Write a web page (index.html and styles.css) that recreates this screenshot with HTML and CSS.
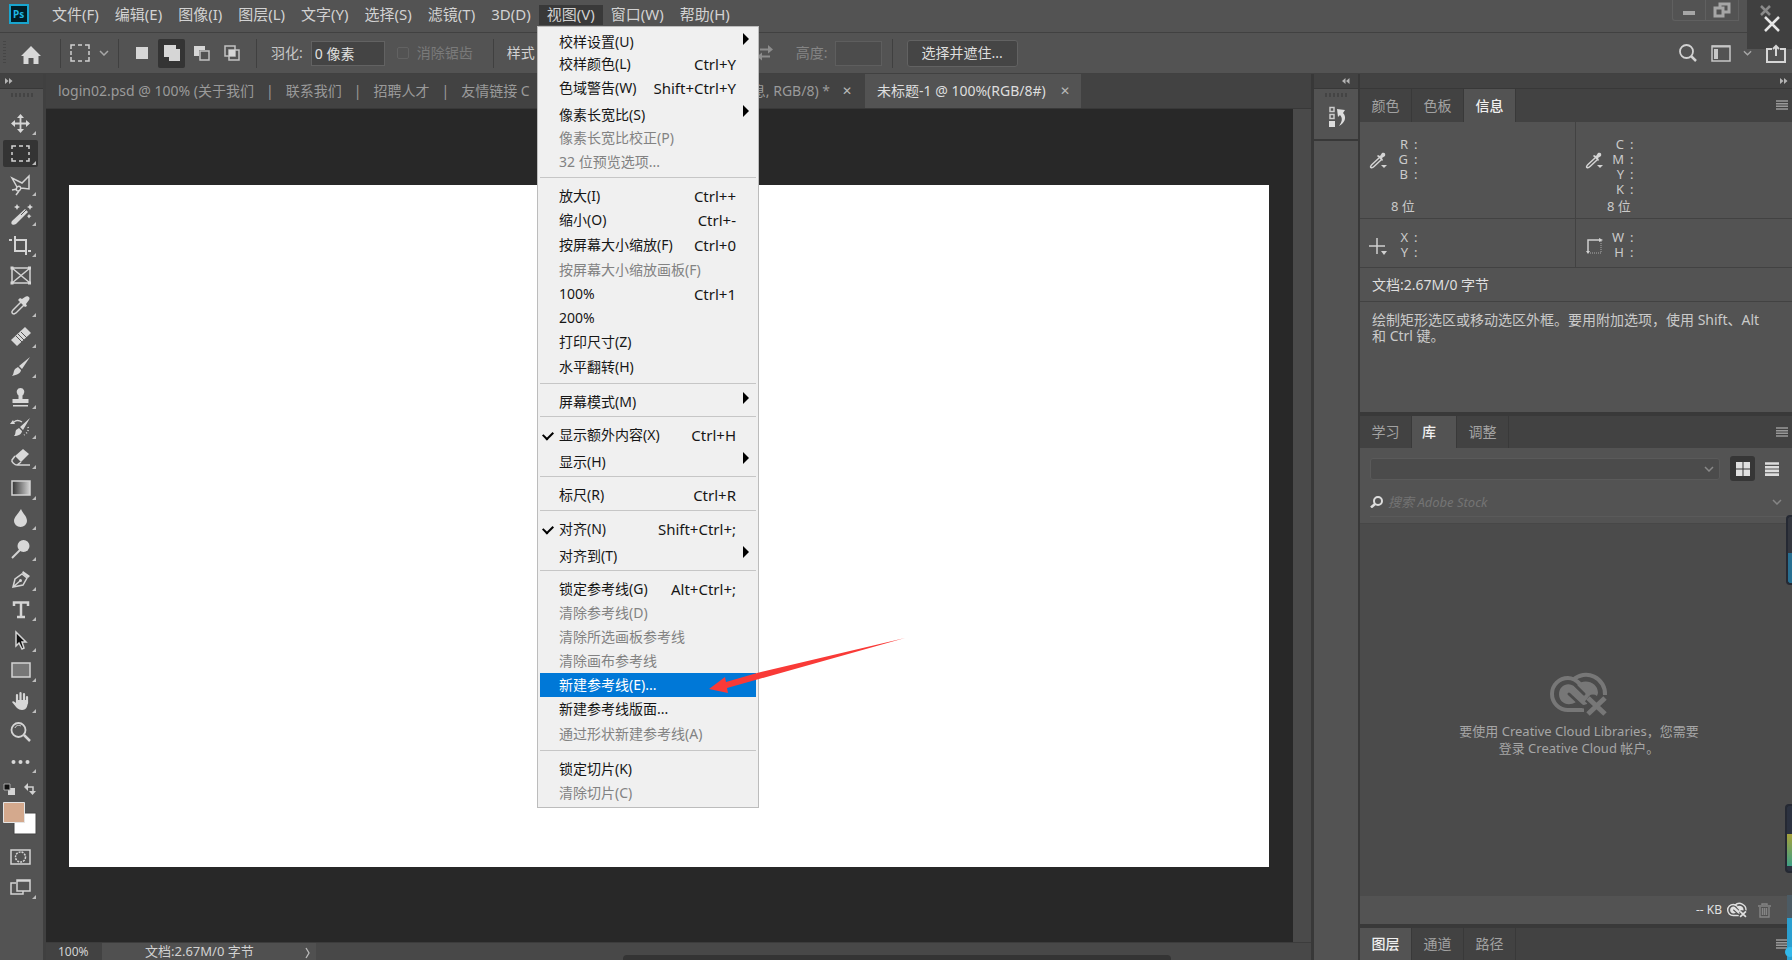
FILE: index.html
```html
<!DOCTYPE html>
<html lang="zh-CN">
<head>
<meta charset="utf-8">
<title>未标题-1 @ 100%(RGB/8#)</title>
<link rel="stylesheet" href="styles.css">
</head>
<body>
<svg class="defs" aria-hidden="true">
  <symbol id="cc-off" viewBox="0 0 58 46">
    <path d="M34 39H18A16 16 0 0 1 18 7c5 0 8 2 12 6" fill="none" stroke="currentColor" stroke-width="4"/>
    <path d="M23 9A19 19 0 0 1 55 24" fill="none" stroke="currentColor" stroke-width="4"/>
    <path d="M27 14c7-7 21-3 21 8l-1 3c-4-3-9-1-10 4l-2 2z" fill="currentColor"/>
    <path d="M9 23c0-9 10-13 16-7l14 13-2 4-3 1c-3 0-5-1-8-3-8 5-17 1-17-8z" fill="currentColor"/>
    <path d="M19 23 33 36M26 15 34 23" stroke="var(--cut)" stroke-width="3" fill="none" stroke-linecap="round"/>
    <path d="M38 27 55 43M55 27 38 43" stroke="var(--cut)" stroke-width="9"/>
    <path d="M38 27 55 43M55 27 38 43" stroke="currentColor" stroke-width="5"/>
  </symbol>
  <symbol id="dropper" viewBox="0 0 19 17">
    <path d="M10 6 3 12.500c-1 1-2 2.500-1 3s2 0 3-1L12 8" fill="none" stroke="currentColor" stroke-width="1.500"/>
    <path d="M8 4l1-1 2 1 2-3c2-1 4 0 3 3l-3 2 1 2-1 1z" fill="currentColor"/>
    <path d="M12 13h6l-3 3z" fill="currentColor"/>
  </symbol>
  <symbol id="lines" viewBox="0 0 12 10"><path d="M0 1h12M0 3.700h12M0 6.300h12M0 9h12" stroke="currentColor" stroke-width="1.500"/></symbol>
  <symbol id="chev" viewBox="0 0 10 6"><path d="M1 1l4 4 4-4" fill="none" stroke="currentColor" stroke-width="1.500"/></symbol>
</svg>

<header class="menubar">
  <svg class="logo" viewBox="0 0 20 20" role="img" aria-label="Ps"><rect x="1" y="1" width="18" height="18" fill="#001d26" stroke="#19a5cf" stroke-width="2"/><text x="4" y="14" class="logo-text">Ps</text></svg>
  <nav class="menus">
    <button>文件(F)</button><button>编辑(E)</button><button>图像(I)</button><button>图层(L)</button><button>文字(Y)</button><button>选择(S)</button><button>滤镜(T)</button><button>3D(D)</button><button class="open">视图(V)</button><button>窗口(W)</button><button>帮助(H)</button>
  </nav>
  <div class="wincontrols">
    <button aria-label="最小化"><svg width="14" height="14" viewBox="0 0 14 14"><path d="M1 10h12" stroke="#a6a6a6" stroke-width="4"/></svg></button>
    <button aria-label="还原"><svg width="18" height="16" viewBox="0 0 18 16"><path d="M7 5V2h9v8h-5M2 6h8v8H2z" fill="none" stroke="#a6a6a6" stroke-width="3"/></svg></button>
  </div>
</header>
<button class="close" aria-label="关闭"><svg width="45" height="49" viewBox="0 0 45 49"><path d="M14 6l9 9M23 6l-9 9" stroke="#8a8a8a" stroke-width="2.500"/><path d="M18 17l14 14M32 17 18 31" stroke="#e6e6e6" stroke-width="2.500"/></svg></button>

<section class="options">
  <span class="grip-v"></span>
  <button class="home" aria-label="主页"><svg width="20" height="18" viewBox="0 0 20 18"><path d="M10 0 20 10h-2.500v8h-5v-6h-5v6h-5v-8H0z" fill="#d8d8d8"/></svg></button>
  <span class="sep"></span>
  <button class="marquee" aria-label="矩形选框"><svg width="20" height="18" viewBox="0 0 20 18"><path d="M1 5V1h4M8 1h4M15 1h4v4M19 7v4M19 13v4h-4M12 17H8M5 17H1v-4M1 11V7" fill="none" stroke="#d0d0d0" stroke-width="1.500"/></svg><svg class="chev" width="10" height="6"><use href="#chev"/></svg></button>
  <span class="sep"></span>
  <div class="modes">
    <button aria-label="新选区"><svg width="18" height="18" viewBox="0 0 18 18"><path d="M3 3h12v12H3z" fill="#d6d6d6"/></svg></button>
    <button class="on" aria-label="添加到选区"><svg width="18" height="18" viewBox="0 0 18 18"><path d="M1 1h12v4h4v12H6v-4H1z" fill="#d6d6d6"/></svg></button>
    <button aria-label="从选区减去"><svg width="18" height="18" viewBox="0 0 18 18"><path d="M1 2h11v4H6v6H1z" fill="#d6d6d6"/><path d="M7 7h9v9H7z" fill="none" stroke="#c2c2c2" stroke-width="1.500"/></svg></button>
    <button aria-label="与选区交叉"><svg width="18" height="18" viewBox="0 0 18 18"><path d="M2 2h10v10H2zM6 6h10v10H6z" fill="none" stroke="#c2c2c2" stroke-width="1.500"/><path d="M6 6h6v6H6z" fill="#d6d6d6"/></svg></button>
  </div>
  <span class="sep"></span>
  <label class="feather">羽化:<input type="text" value="0 像素"></label>
  <label class="alias"><input type="checkbox" disabled>消除锯齿</label>
  <span class="sep"></span>
  <span class="style-label">样式</span>
  <svg class="swap" width="16" height="16" viewBox="0 0 16 16"><path d="M3 4.500h9M4 11.500h9" stroke="#8c8c8c" stroke-width="2"/><path d="M11 0l5 4.500-5 4zM5 7.500l-5 4 5 4z" fill="#8c8c8c"/></svg>
  <label class="height">高度:<input type="text" disabled></label>
  <span class="sep"></span>
  <button class="mask">选择并遮住...</button>
  <div class="right-tools">
    <button aria-label="搜索"><svg width="18" height="18" viewBox="0 0 18 18"><circle cx="7.500" cy="7.500" r="6.500" fill="none" stroke="#d2d2d2" stroke-width="1.800"/><path d="M12 12l5 5" stroke="#d2d2d2" stroke-width="2.500"/></svg></button>
    <button class="workspace" aria-label="工作区"><svg width="20" height="17" viewBox="0 0 20 17"><path d="M1 1h18v15H1z" fill="none" stroke="#c6c6c6" stroke-width="1.500"/><path d="M1 1.500h18" stroke="#c6c6c6" stroke-width="2"/><path d="M3 4h4v10H3z" fill="#c6c6c6"/></svg><svg class="chev" width="9" height="6"><use href="#chev"/></svg></button>
    <button aria-label="共享"><svg width="20" height="19" viewBox="0 0 20 19"><path d="M6 5H1v13h18V5h-5" fill="none" stroke="#d6d6d6" stroke-width="2"/><path d="M10 12V3M7 5l3-3 3 3" fill="none" stroke="#d6d6d6" stroke-width="2"/></svg></button>
  </div>
</section>

<main class="work">
  <aside class="toolbar">
    <div class="strip"><svg width="8" height="6" viewBox="0 0 8 6"><path d="M0 0l3.500 3L0 6zM4 0l3.500 3L4 6z" fill="#b4b4b4"/></svg></div>
    <div class="grip"></div>
    <ul class="tools">
      <li><button class="more" aria-label="移动"><svg viewBox="0 0 35 27"><path d="M17.500 6v15M10 13.500h15" stroke-width="1.800"/><path class="f" d="M17.500 4l3.500 4h-7zM17.500 23l3.500-4h-7zM8 13.500l4-3.500v7zM27 13.500l-4-3.500v7z"/></svg></button></li>
      <li><button class="more on" aria-label="选框"><svg viewBox="0 0 35 27"><path d="M9 9V6h4M16 6h4M23 6h3v3M26 12v3M26 18v3h-3M20 21h-4M13 21H9v-3M9 15v-3"/></svg></button></li>
      <li><button class="more" aria-label="套索"><svg viewBox="0 0 35 27"><path d="M14 16 9 7l10 5 7-7v13l-8-1M14 16c3-2 5 1 3 3s-5 1-3-3M14 18l-5 1M16 20l-3 4"/></svg></button></li>
      <li><button class="more" aria-label="魔棒"><svg viewBox="0 0 35 27"><path class="f" d="M9 20 22 8l3 3-12 12c-3 2-6 0-4-3z"/><path d="M18 14l5-5" stroke="#535353" stroke-width="1"/><path class="f" d="M14 3l1 2 2 1-2 1-1 2-1-2-2-1 2-1zM27 3l1 2 2 1-2 1-1 2-1-2-2-1 2-1zM26 13l1 1.500 1.500.5-1.500 1-1 1.500-1-1.500-1-1 1-.5z"/></svg></button></li>
      <li><button class="more" aria-label="裁剪"><svg viewBox="0 0 35 27"><path d="M12 4v15h10M25 19h3M6 8h3M12 8h11v15" stroke-width="2"/></svg></button></li>
      <li><button aria-label="图框"><svg viewBox="0 0 35 27"><path d="M9 6h18v15H9zM9 6l18 15M27 6 9 21"/><path class="f" d="M7.500 4.500h3v3h-3zM25 4.500h3v3h-3zM7.500 19.500h3v3h-3zM25 19.500h3v3h-3z"/></svg></button></li>
      <li><button class="more" aria-label="吸管"><svg viewBox="0 0 35 27"><path d="M18 10l-8 8c-2 2-1 4 1 4l2-1 8-8"/><path class="f" d="M15 8l2-2 2 1 3-2c2-2 6 0 4 3l-3 4 1 2-2 1z"/></svg></button></li>
      <li><button class="more" aria-label="修复"><svg viewBox="0 0 35 27"><path class="f" d="M22 4l6 6-14 13-6-6z"/><path d="M13 13l6 6M15 11l6 6M18 9l6 6" stroke="#535353" stroke-width="1"/></svg></button></li>
      <li><button class="more" aria-label="画笔"><svg viewBox="0 0 35 27"><path class="f" d="M27 4 19 16l-3-3zM15 14l3 3c0 3-4 5-9 6 2-2 1-4 3-7z"/></svg></button></li>
      <li><button class="more" aria-label="图章"><svg viewBox="0 0 35 27"><path class="f" d="M17.500 4a4 4 0 0 1 3 6.500l-1 1V15h6v4h-16v-4h6v-3.500l-1-1a4 4 0 0 1 3-6.500zM10 21h15v1.500H10z"/></svg></button></li>
      <li><button class="more" aria-label="历史画笔"><svg viewBox="0 0 35 27"><path class="f" d="M27 4 20 16l-3-3zM16 14l3 3c0 3-4 5-8 5 2-2 1-4 2-6zM7 10l3-4 2 4z"/><path d="M11 8c2-2 5-2 8 0"/><path d="M25 13c1 4-1 6-4 8" stroke-dasharray="1 2"/></svg></button></li>
      <li><button class="more" aria-label="橡皮擦"><svg viewBox="0 0 35 27"><path class="f" d="M20 5l6 5-8 8-6-6z"/><path d="M12 12l-3 4c-1 2 3 5 5 5l4-3M14 21h13"/></svg></button></li>
      <li><button class="more" aria-label="渐变"><svg viewBox="0 0 35 27"><defs><linearGradient id="gr"><stop stop-color="#333"/><stop offset="1" stop-color="#d4d4d4"/></linearGradient></defs><path d="M9 6h18v14H9z" fill="url(#gr)"/></svg></button></li>
      <li><button class="more" aria-label="模糊"><svg viewBox="0 0 35 27"><path class="f" d="M18 4c2 5 6 7 6 12a6.500 6 0 0 1-13 0c0-4 4-7 7-12z"/></svg></button></li>
      <li><button class="more" aria-label="减淡"><svg viewBox="0 0 35 27"><circle class="f" cx="20.500" cy="10" r="6"/><path d="M17 14l-8 8" stroke-width="2"/></svg></button></li>
      <li><button class="more" aria-label="钢笔"><svg viewBox="0 0 35 27"><path d="M10 21l2-8 7-5 5 4-4 7zM10 21l7-6"/><path class="f" d="M20 5l7 5-2 2-6-5z"/><circle class="f" cx="17.500" cy="14.500" r="1.500"/></svg></button></li>
      <li><button class="more" aria-label="文字"><svg viewBox="0 0 35 27"><path d="M11 10V6.500h14V10M18 6v15M14 21h8" stroke-width="2.500"/></svg></button></li>
      <li><button class="more" aria-label="选择"><svg viewBox="0 0 35 27"><path d="M13 5v14l3-3 3 6 2-1-2-6h4z" fill="#111"/></svg></button></li>
      <li><button class="more" aria-label="矩形"><svg viewBox="0 0 35 27"><path d="M9 6h18v14H9z" fill="#777"/></svg></button></li>
      <li><button class="more" aria-label="抓手"><svg viewBox="0 0 35 27"><path d="M14 15V7M17.500 14V5M21 14V6M24 15V9" stroke-width="2.200" stroke-linecap="round"/><path class="f" d="M13 12h12c0 5-1 10-6 10-4 0-6-3-10-8 1-2 3 0 4 1z"/></svg></button></li>
      <li><button aria-label="缩放"><svg viewBox="0 0 35 27"><circle cx="15.500" cy="12" r="7" stroke-width="1.800"/><path d="M12 10c1-3 4-3 6-2" stroke-width="1"/><path d="M21 17l6 6" stroke-width="2.500"/></svg></button></li>
      <li><button class="more" aria-label="编辑工具栏"><svg viewBox="0 0 35 27"><circle class="f" cx="10.500" cy="14" r="2"/><circle class="f" cx="17.500" cy="14" r="2"/><circle class="f" cx="24.500" cy="14" r="2"/></svg></button></li>
    </ul>
    <svg class="colors" viewBox="0 0 42 52" role="img" aria-label="前景色和背景色">
      <path d="M8 5h7v7H8z" fill="#d4d4d4"/><path d="M4 1h6v6H4z" fill="#111" stroke="#aaa"/>
      <path d="M27 4h6v5" fill="none" stroke="#d0d0d0" stroke-width="1.500"/><path d="M28 0v8l-4-4zM29 8h7l-3.500 4z" fill="#d0d0d0"/>
      <path d="M14 30h22v21H14z" fill="#fff" stroke="#444"/><path d="M3.500 19.500h21v20h-21z" fill="#d4a98d" stroke="#e4e4e4"/>
    </svg>
    <ul class="tools lower">
      <li><button aria-label="快速蒙版"><svg viewBox="0 0 35 27"><path d="M8 6h19v14H8z"/><circle cx="17.500" cy="13" r="5" stroke-dasharray="2 1"/></svg></button></li>
      <li><button class="more" aria-label="屏幕模式"><svg viewBox="0 0 35 27"><path d="M13 9H8v11h12v-3M14 6h13v11H14zM14 7h13"/></svg></button></li>
    </ul>
  </aside>

  <section class="document">
    <div class="tabs">
      <div class="tab tab-back"><span>login02.psd @ 100% (关于我们</span><span>|</span><span>联系我们</span><span>|</span><span>招聘人才</span><span>|</span><span>友情链接 C</span><span class="tail">息, RGB/8) *</span><button aria-label="关闭标签">✕</button></div>
      <div class="tab active"><span>未标题-1 @ 100%(RGB/8#)</span><button aria-label="关闭标签">✕</button></div>
    </div>
    <div class="stage"><div class="canvas"></div></div>
    <footer class="status"><span class="zoom">100%</span><span class="doc">文档:2.67M/0 字节</span><span class="next"><svg width="6" height="12" viewBox="0 0 6 12"><path d="M1 1l3 5-3 5" fill="none" stroke="#bbb" stroke-width="1.300"/></svg></span><span class="thumb"></span></footer>
  </section>

  <aside class="dock-icons">
    <div class="strip end"><svg width="8" height="6" viewBox="0 0 8 6"><path d="M3.500 0 0 3l3.500 3zM7.500 0 4 3l3.500 3z" fill="#b4b4b4"/></svg></div>
    <div class="history"><div class="grip"></div><button aria-label="历史记录"><svg width="20" height="22" viewBox="0 0 20 22"><path d="M2 1.500h4v4H2zM2 8.500h4v4H2z" fill="none" stroke="#ccc" stroke-width="1.500"/><path d="M1 15h6v6H1z" fill="#ddd"/><path d="M11 20c6-3 8-9 4-13l2-3-8-1 1 8 2-2c3 3 2 7-1 11z" fill="#ddd"/></svg></button></div>
  </aside>

  <aside class="panels">
    <div class="strip end"><svg width="8" height="6" viewBox="0 0 8 6"><path d="M0 0l3.500 3L0 6zM4 0l3.500 3L4 6z" fill="#b4b4b4"/></svg></div>
    <section class="info">
      <div class="ptabs"><button>颜色</button><button>色板</button><button class="on">信息</button><svg class="pmenu" width="12" height="10"><use href="#lines"/></svg></div>
      <div class="grid">
        <div class="cell tall"><svg width="19" height="17"><use href="#dropper"/></svg><dl><dt>R</dt><dd>:</dd><dt>G</dt><dd>:</dd><dt>B</dt><dd>:</dd></dl><p>8 位</p></div>
        <div class="cell tall"><svg width="19" height="17"><use href="#dropper"/></svg><dl><dt>C</dt><dd>:</dd><dt>M</dt><dd>:</dd><dt>Y</dt><dd>:</dd><dt>K</dt><dd>:</dd></dl><p>8 位</p></div>
        <div class="cell"><svg width="19" height="17" viewBox="0 0 19 17"><path d="M8 0v16M0 8h16" stroke="#d0d0d0" stroke-width="1.500"/><path d="M12 13h6l-3 4z" fill="#d0d0d0"/></svg><dl><dt>X</dt><dd>:</dd><dt>Y</dt><dd>:</dd></dl></div>
        <div class="cell"><svg width="19" height="17" viewBox="0 0 19 17"><path d="M3 14V2h12" fill="none" stroke="#d0d0d0" stroke-width="1.500"/><path d="M16 3v12H4" fill="none" stroke="#aaa" stroke-dasharray="1 1"/><path d="M14 0l4 2-4 2zM1 13h4l-2 3z" fill="#d0d0d0"/></svg><dl><dt>W</dt><dd>:</dd><dt>H</dt><dd>:</dd></dl></div>
      </div>
      <p class="size">文档:2.67M/0 字节</p>
      <p class="hint">绘制矩形选区或移动选区外框。要用附加选项，使用 Shift、Alt 和 Ctrl 键。</p>
    </section>
    <section class="library">
      <div class="ptabs"><button>学习</button><button class="on">库</button><button>调整</button><svg class="pmenu" width="12" height="10"><use href="#lines"/></svg></div>
      <div class="picker">
        <div class="selectbox"><select aria-label="库"><option></option></select><svg width="10" height="6"><use href="#chev"/></svg></div>
        <button class="on" aria-label="网格视图"><svg width="14" height="14" viewBox="0 0 14 14"><path d="M0 0h6.500v6.500H0zM7.500 0H14v6.500H7.500zM0 7.500h6.500V14H0zM7.500 7.500H14V14H7.500z" fill="#e0e0e0"/></svg></button>
        <button aria-label="列表视图"><svg width="14" height="14" viewBox="0 0 14 14"><path d="M0 1.500h14M0 5.200h14M0 8.900h14M0 12.600h14" stroke="#ddd" stroke-width="2.600"/></svg></button>
      </div>
      <div class="search"><svg width="13" height="12" viewBox="0 0 13 12"><circle cx="8" cy="5" r="4" fill="none" stroke="#ddd" stroke-width="2"/><path d="M5 8l-4 3.500" stroke="#ddd" stroke-width="2.500"/></svg><input type="text" placeholder="搜索 Adobe Stock" aria-label="搜索"><svg class="dim" width="10" height="6"><use href="#chev"/></svg></div>
      <div class="empty"><svg width="58" height="46"><use href="#cc-off"/></svg><p>要使用 Creative Cloud Libraries，您需要<br>登录 Creative Cloud 帐户。</p></div>
      <div class="libfoot"><span>-- KB</span><svg width="20" height="16"><use href="#cc-off"/></svg><button aria-label="删除"><svg width="13" height="15" viewBox="0 0 13 15"><path d="M0 3h13M4 2V1h5v1M2 4v10h9V4M4.500 5v7M6.500 5v7M8.500 5v7" fill="none" stroke="#858585" stroke-width="1.400"/></svg></button></div>
    </section>
    <section class="layers"><div class="ptabs"><button class="on">图层</button><button>通道</button><button>路径</button><svg class="pmenu" width="12" height="10"><use href="#lines"/></svg></div></section>
  </aside>
</main>

<ul class="dropdown" role="menu">
  <li class="sub">校样设置(U)</li>
  <li>校样颜色(L)<kbd>Ctrl+Y</kbd></li>
  <li>色域警告(W)<kbd>Shift+Ctrl+Y</kbd></li>
  <li class="sub tall">像素长宽比(S)</li>
  <li class="off">像素长宽比校正(P)</li>
  <li class="off">32 位预览选项...</li>
  <li class="rule"></li>
  <li>放大(I)<kbd>Ctrl++</kbd></li>
  <li>缩小(O)<kbd>Ctrl+-</kbd></li>
  <li class="tall">按屏幕大小缩放(F)<kbd>Ctrl+0</kbd></li>
  <li class="off">按屏幕大小缩放画板(F)</li>
  <li>100%<kbd>Ctrl+1</kbd></li>
  <li>200%</li>
  <li>打印尺寸(Z)</li>
  <li class="tall">水平翻转(H)</li>
  <li class="rule tight"></li>
  <li class="sub tall">屏幕模式(M)</li>
  <li class="rule"></li>
  <li class="checked">显示额外内容(X)<kbd>Ctrl+H</kbd></li>
  <li class="sub tall">显示(H)</li>
  <li class="rule"></li>
  <li>标尺(R)<kbd>Ctrl+R</kbd></li>
  <li class="rule"></li>
  <li class="checked">对齐(N)<kbd>Shift+Ctrl+;</kbd></li>
  <li class="sub tall">对齐到(T)</li>
  <li class="rule"></li>
  <li>锁定参考线(G)<kbd>Alt+Ctrl+;</kbd></li>
  <li class="off">清除参考线(D)</li>
  <li class="off">清除所选画板参考线</li>
  <li class="off">清除画布参考线</li>
  <li class="hot">新建参考线(E)...</li>
  <li>新建参考线版面...</li>
  <li class="off tall">通过形状新建参考线(A)</li>
  <li class="rule"></li>
  <li>锁定切片(K)</li>
  <li class="off">清除切片(C)</li>
</ul>
<svg class="pointer" width="200" height="60" viewBox="0 0 200 60" aria-hidden="true"><path d="M2 54 18 42l1 5L50 38 198 3 52 44 20 53l1 5z" fill="#f93a37"/></svg>
<div class="gadget blue"></div>
<div class="gadget green"></div>
<div class="slider"></div>
</body>
</html>
```
FILE: styles.css
```css
* { box-sizing: border-box; margin: 0; padding: 0; }
body {
  display: flex; flex-direction: column; height: 100vh; overflow: hidden;
  background: #535353; color: #d2d2d2;
  font: 14px/20px "Noto Sans", "Noto Sans CJK SC", sans-serif;
}
button { background: none; border: 0; color: inherit; font: inherit; }
input, select { font: inherit; color: inherit; }
ul { list-style: none; }
svg { display: block; flex: none; }
.defs { position: absolute; width: 0; height: 0; }

/* Menu bar */
.menubar { display: flex; align-items: flex-start; height: 33px; border-bottom: 1px solid #414141; padding-left: 9px; flex: none; }
.logo { width: 20px; height: 20px; margin-top: 4px; }
.logo-text { font: bold 10px "Noto Sans", sans-serif; fill: #1fb6e4; }
.menus { display: flex; padding: 5px 0 0 15px; flex: 1; }
.menus button { font-size: 15px; line-height: 18px; padding: 0 8px 2px; height: 20px; white-space: nowrap; }
.menus .open { background: #393939; }
.wincontrols { display: flex; margin-right: 53px; border: 1px solid #606060; border-width: 0 0 1px 1px; border-radius: 0 0 0 3px; }
.wincontrols button { width: 33px; height: 20px; display: grid; place-items: center; border-right: 1px solid #606060; }
.close { position: absolute; top: 0; right: 0; background: #404040; }

/* Options bar */
.options { display: flex; align-items: center; height: 41px; flex: none; border-bottom: 1px solid #414141; padding: 0 6px 0 3px; }
.grip-v { width: 3px; height: 24px; background: repeating-linear-gradient(#464646 0 1px, transparent 1px 3px); }
.home { margin: 4px 19px 0 15px; }
.sep { width: 1px; height: 29px; background: #404040; }
.marquee { display: flex; align-items: center; gap: 9px; padding: 0 9px; }
.chev { color: #a8a8a8; }
.modes { display: flex; padding: 0 11px 0 9px; gap: 3px; }
.modes button { width: 27px; height: 29px; display: grid; place-items: center; border-radius: 2px; }
.modes .on { background: #343434; }
.feather { display: flex; align-items: center; gap: 8px; margin-left: 14px; color: #c6c6c6; }
.feather input { width: 74px; height: 25px; background: #444; border: 1px solid #626262; padding: 0 3px; color: #e0e0e0; }
.alias { display: flex; align-items: center; gap: 8px; margin: 0 20px 0 12px; color: #7a7a7a; }
.alias input { appearance: none; width: 12px; height: 12px; border: 1px solid #626262; border-radius: 2px; }
.style-label { margin-left: 13px; width: 250px; }
.height { display: flex; align-items: center; gap: 7px; margin: 0 10px 0 23px; color: #858585; }
.height input { width: 47px; height: 25px; background: #4c4c4c; border: 1px solid #5e5e5e; }
.mask { margin-left: 14px; width: 111px; height: 27px; background: #454545; border: 1px solid #626262; border-radius: 3px; color: #dedede; }
.right-tools { display: flex; align-items: center; gap: 14px; margin-left: auto; position: relative; z-index: 1; }
.workspace { display: flex; align-items: center; gap: 12px; }

.work { display: flex; flex: 1; min-height: 0; }
.strip { height: 15px; background: #424242; border-bottom: 1px solid #383838; display: flex; align-items: center; padding: 0 5px; }
.strip.end { justify-content: flex-end; padding: 0 8px; }
.panels .strip.end { padding: 0 4px; }
.grip { width: 22px; height: 4px; margin: 4px auto 0; background: repeating-linear-gradient(90deg, #444 0 2px, transparent 2px 4px); }

/* Tools */
.toolbar { width: 46px; flex: none; border-right: 3px solid #404040; }
.tools { padding: 13px 0 0 3px; }
.tools li { height: 30px; }
.tools li:nth-child(5n+2), .tools li:nth-child(5n+4) { height: 31px; }
.tools button { position: relative; width: 35px; height: 27px; border-radius: 2px; display: block; }
.tools .on { background: #343434; }
.tools svg { width: 35px; height: 27px; fill: none; stroke: #d4d4d4; stroke-width: 1.5px; }
.tools .f { fill: #d8d8d8; stroke: none; }
.tools .more::after { content: ""; position: absolute; right: 2px; bottom: 2px; width: 4px; height: 4px; background: #bcbcbc; clip-path: polygon(100% 0, 100% 100%, 0 100%); }
.colors { width: 42px; height: 52px; margin-top: 4px; }
.tools.lower { padding-top: 9px; }

/* Document */
.document { display: flex; flex-direction: column; flex: 1; min-width: 0; }
.tabs { display: flex; height: 35px; background: #424242; border-bottom: 1px solid #383838; flex: none; }
.tab { display: flex; align-items: center; white-space: nowrap; color: #9a9a9a; }
.tab button { font-size: 12px; color: #b8b8b8; }
.tab-back { gap: 12px; width: 819px; padding: 0 13px 0 12px; }
.tab-back .tail { margin-left: auto; }
.tab.active { background: #535353; color: #dedede; padding: 0 11px 0 12px; gap: 14px; }
.stage { flex: 1; min-height: 0; background: #282828; border-right: 18px solid #4a4a4a; padding: 76px 24px 75px 23px; display: flex; }
.canvas { flex: 1; background: #fff; }
.status { display: flex; height: 18px; flex: none; background: #484848; border-top: 1px solid #3c3c3c; font-size: 12px; line-height: 17px; }
.zoom { width: 56px; padding-left: 12px; background: #424242; }
.doc { width: 190px; padding-left: 43px; background: #505050; font-size: 13px; white-space: nowrap; }
.next { width: 24px; padding: 4px 0 0 13px; background: #505050; overflow: hidden; }
.thumb { flex: 1; align-self: flex-end; height: 5px; margin: 0 140px 0 307px; background: #343434; border-radius: 4px 4px 0 0; }

/* Dock */
.dock-icons { width: 49px; flex: none; border: solid #383838; border-width: 0 2px 0 3px; }
.history { height: 48px; border-bottom: 2px solid #383838; }
.history button { display: block; margin: 9px 0 0 14px; }
.panels { width: 432px; flex: none; display: flex; flex-direction: column; }
.ptabs { display: flex; height: 32px; background: #424242; color: #a2a2a2; }
.ptabs button { width: 52px; border-right: 1px solid #393939; }
.ptabs .on { background: #535353; color: #f0f0f0; font-weight: 500; }
.pmenu { margin: 11px 4px 0 auto; color: #999; }
.info { height: 327px; border-bottom: 4px solid #393939; color: #cacaca; font-size: 13px; flex: none; }
.info .ptabs { font-size: 14px; height: 33px; }
.grid { display: grid; grid-template-columns: 1fr 1fr; border-bottom: 1px solid #424242; }
.cell { display: grid; grid-template-columns: 19px 26px 16px; padding: 11px 0 0 9px; height: 48px; align-content: start; line-height: 15px; }
.cell:nth-child(odd) { border-right: 1px solid #424242; }
.cell > svg { margin-top: 8px; color: #d4d4d4; }
.cell.tall { height: 97px; padding-top: 15px; border-bottom: 1px solid #424242; grid-template-rows: 62px 15px; }
.cell.tall > svg { margin-top: 15px; }
.cell dl { display: grid; grid-column: 2 / 4; grid-template-columns: 20px 14px; align-content: start; column-gap: 6px; }
.cell dt { text-align: right; }
.cell p { grid-column: 1 / 4; padding-left: 22px; }
.size { padding: 7px 12px 6px; border-bottom: 1px solid #424242; font-size: 14px; color: #dedede; }
.hint { padding: 10px 28px 0 12px; font-size: 14px; line-height: 16px; }
.library { flex: 1; min-height: 0; display: flex; flex-direction: column; }
.library .ptabs button:nth-child(2) { width: 45px; padding-right: 10px; }
.picker { display: flex; align-items: center; padding: 8px 8px 8px 10px; gap: 4px; }
.picker button { width: 25px; height: 25px; border-radius: 3px; display: grid; place-items: center; }
.picker .on { background: #363636; }
.selectbox { flex: 1; display: flex; align-items: center; height: 22px; margin-right: 6px; padding-right: 5px; background: #4b4b4b; border: 1px solid #5a5a5a; border-radius: 3px; color: #888; }
.selectbox select { appearance: none; flex: 1; height: 20px; border: 0; background: none; }
.search { display: flex; align-items: center; gap: 5px; margin-left: 10px; padding: 0 10px 1px 0; height: 28px; border-bottom: 1px solid #5a5a5a; }
.search input { flex: 1; background: none; border: 0; font-style: italic; font-size: 13px; }
.search input::placeholder { color: #747474; }
.dim { color: #858585; }
.empty { flex: 1; margin-top: 6px; background: #4b4b4b; display: flex; flex-direction: column; align-items: center; padding: 147px 0 0 6px; color: #777; --cut: #4b4b4b; border-top: 1px solid #474747; }
.empty p { margin-top: 6px; text-align: center; font-size: 13px; line-height: 17px; color: #a6a6a6; }
.libfoot { display: flex; align-items: center; justify-content: flex-end; gap: 5px; height: 28px; padding-right: 21px; font-size: 12px; color: #e0e0e0; --cut: #535353; }
.libfoot button { margin-left: 6px; }
.layers { border-top: 4px solid #393939; flex: none; }

/* View menu */
.dropdown { position: absolute; left: 537px; top: 26px; width: 222px; padding: 1px 2px 2px; background: #f0f0f0; border: 1px solid #bcbcbc; color: #161616; font-size: 14px; }
.dropdown li { position: relative; display: flex; justify-content: space-between; align-items: center; height: 24px; padding: 0 20px 0 19px; white-space: nowrap; }
.dropdown .tall { height: 26px; }
.dropdown kbd { font: inherit; font-size: 15px; }
.dropdown .off { color: #828282; }
.dropdown .hot { background: #0078d7; color: #fff; }
.dropdown .sub { padding-top: 4px; }
.dropdown .sub::after { content: ""; position: absolute; right: 7px; top: 5px; border: solid transparent; border-width: 6px 0 6px 6px; border-left-color: #000; }
.dropdown .checked::before { content: ""; position: absolute; left: 3px; top: 8px; width: 8px; height: 5px; border: solid #000; border-width: 0 0 2px 2px; rotate: -45deg; }
.dropdown .rule { height: 1px; margin: 3px 0 6px; padding: 0; background: #c6c6c6; }
.dropdown .rule.tight { margin-bottom: 3px; }

/* Overlays */
.pointer { position: absolute; left: 707px; top: 635px; }
.gadget { position: absolute; right: 0; border: 2px solid #252933; border-right: 0; border-radius: 4px 0 0 4px; }
.gadget.blue { top: 515px; width: 6px; height: 70px; background: linear-gradient(#34373f 0 55%, #286f91 55%); }
.gadget.green { top: 804px; width: 7px; height: 69px; background: linear-gradient(#2c3240 0 43%, #a6a13b 43%, #3f9f84 92%, #2c3240 92%); }
.slider { position: absolute; right: 0; top: 895px; width: 5px; height: 65px; background: linear-gradient(#4c5b64 0 36%, #2a9fd0 36%); }
.slider::after { content: ""; position: absolute; right: -3px; bottom: 3px; width: 10px; height: 10px; border-radius: 50%; background: #32b8ea; }
```
